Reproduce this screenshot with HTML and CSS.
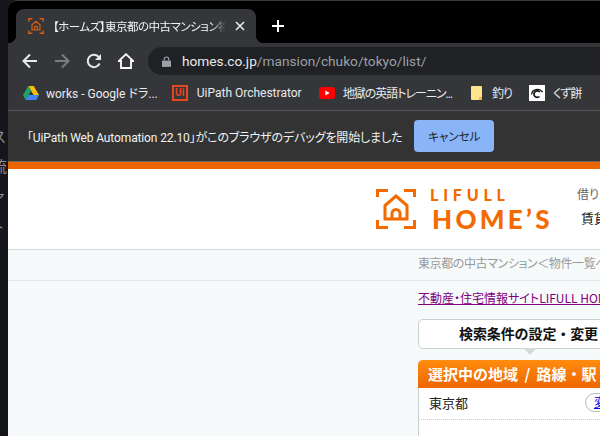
FILE: index.html
```html
<!DOCTYPE html>
<html lang="ja">
<head>
    <meta charset="UTF-8">
    <title>東京都の中古マンション</title>
    <link rel="stylesheet" href="styles.css">
</head>
<body>
    <div class="desktop-strip">
        <span>ス</span>
        <span>流</span>
        <span>ァ</span>
        <span>ト</span>
    </div>
    <div class="window">
        <div class="tabstrip">
            <div class="tab">
                <svg class="favicon" viewBox="0 0 40 40" width="16" height="16">
                    <path d="M2 9V2h9M29 2h9v7M2 31v7h9M29 38h9v-7" fill="none" stroke="#d85f10" stroke-width="3.500"/>
                    <path d="M10 30V17L20 8l10 9v13zM16.500 30v-6a3.500 3.500 0 0 1 7 0v6" fill="none" stroke="#d85f10" stroke-width="3"/>
                </svg>
                <span class="tab-title">【ホームズ】東京都の中古マンション物件一覧</span>
                <svg class="tab-close" viewBox="0 0 10 10" width="10" height="10">
                    <path d="M1 1l8 8M9 1l-8 8" stroke="#e8eaed" stroke-width="1.600"/>
                </svg>
            </div>
            <svg class="new-tab" viewBox="0 0 12 12" width="12" height="12">
                <path d="M6 0v12M0 6h12" stroke="#fff" stroke-width="2"/>
            </svg>
        </div>

        <div class="toolbar">
            <svg class="nav-icon" viewBox="0 0 16 16" width="16" height="16">
                <path d="M15 8H2M8 1.500L1.500 8 8 14.500" fill="none" stroke="#e8eaed" stroke-width="2"/>
            </svg>
            <svg class="nav-icon" viewBox="0 0 16 16" width="16" height="16">
                <path d="M1 8h13M8 1.500L14.500 8 8 14.500" fill="none" stroke="#7b7d80" stroke-width="2"/>
            </svg>
            <svg class="nav-icon" viewBox="0 0 16 16" width="16" height="16">
                <path d="M13.600 10.500A6.200 6.200 0 1 1 12.400 3.600L14 5.200" fill="none" stroke="#e8eaed" stroke-width="2"/>
                <path d="M15 1v6H9z" fill="#e8eaed"/>
            </svg>
            <svg class="nav-icon" viewBox="0 0 16 16" width="16" height="16">
                <path d="M3 15V8H.800L8 1.200 15.200 8H13v7z" fill="none" stroke="#fff" stroke-width="1.800"/>
            </svg>
            <div class="address">
                <svg class="lock" viewBox="0 0 10 12" width="9" height="11">
                    <path d="M0 5h10v7H0z" fill="#9aa0a6"/>
                    <path d="M2.500 5V3.500a2.500 2.500 0 0 1 5 0V5" fill="none" stroke="#9aa0a6" stroke-width="1.300"/>
                </svg>
                <span class="host">homes.co.jp</span><span class="path">/mansion/chuko/tokyo/list/</span>
            </div>
        </div>

        <div class="bookmarks">
            <div class="bookmark bookmark-drive">
                <svg viewBox="0 0 16 14" width="16" height="14">
                    <path d="M5.300 0h5.400l5.300 9h-5.400z" fill="#fbbc04"/>
                    <path d="M5.300 0L0 9l2.700 5 5.300-9z" fill="#1ea362"/>
                    <path d="M2.700 14h10.600l2.700-5H5.400z" fill="#4285f4"/>
                </svg>
                <span>works - Google ドラ...</span>
            </div>
            <div class="bookmark bookmark-uipath">
                <div class="uipath-logo">Ui</div>
                <span>UiPath Orchestrator</span>
            </div>
            <div class="bookmark bookmark-youtube">
                <svg viewBox="0 0 16 12" width="16" height="12">
                    <rect width="16" height="12" rx="3" fill="#f00"/>
                    <path d="M6.300 3.500v5l4.400-2.500z" fill="#fff"/>
                </svg>
                <span>地獄の英語トレーニン...</span>
            </div>
            <div class="bookmark bookmark-memo">
                <div class="memo-icon"></div>
                <span>釣り</span>
            </div>
            <div class="bookmark bookmark-kuzu">
                <svg viewBox="0 0 16 16" width="16" height="16">
                    <rect width="16" height="16" fill="#fff"/>
                    <path d="M2.500 9.500A6 5.500 0 0 1 13.500 7" fill="none" stroke="#111" stroke-width="1.300"/>
                    <path d="M10.500 11.500A3.300 3.300 0 1 1 10.800 7" fill="none" stroke="#111" stroke-width="1.700"/>
                </svg>
                <span>くず餅</span>
            </div>
        </div>

        <div class="infobar">
            <span class="infobar-text">「UiPath Web Automation 22.10」がこのブラウザのデバッグを開始しました</span>
            <button class="cancel" type="button">キャンセル</button>
        </div>

        <div class="page">
            <div class="site-header">
                <div class="logo">
                    <svg viewBox="0 0 40 40" width="40" height="40">
                        <path d="M1.500 8V1.500H12M28 1.500h10.500V8M1.500 31v7.500H12M28 38.500h10.500V31" fill="none" stroke="#f26a00" stroke-width="3"/>
                        <path d="M9 30V16.500L20 7l11 9.500V30zM16 30v-5.500a4 4 0 0 1 8 0V30" fill="none" stroke="#f26a00" stroke-width="3"/>
                    </svg>
                    <div class="logo-text">
                        <div class="logo-top">LIFULL</div>
                        <div class="logo-bottom">HOME’S</div>
                    </div>
                </div>
                <div class="site-nav">
                    <div class="nav-small">借り</div>
                    <div class="nav-main">賃貸</div>
                </div>
            </div>

            <div class="breadcrumb">
                <span>東京都の中古マンション＜物件一覧ページ＞</span>
            </div>

            <div class="content">
                <a class="site-link" href="#">不動産・住宅情報サイトLIFULL HOME'S</a>
                <div class="search-change">検索条件の設定・変更</div>
                <div class="panel">
                    <div class="panel-head">選択中の地域 / 路線・駅</div>
                    <div class="panel-row">
                        <span>東京都</span>
                        <a class="change-btn" href="#">変更</a>
                    </div>
                    <div class="panel-rest"></div>
                </div>
            </div>
        </div>
    </div>
</body>
</html>
```

FILE: styles.css
```css
* {
    box-sizing: border-box;
}
html, body {
    width: 600px;
    height: 436px;
    margin: 0;
    overflow: hidden;
}
body {
    display: flex;
    background-color: #15151b;
    font-family: Roboto, "Noto Sans CJK JP", sans-serif;
    font-feature-settings: "palt";
}
.desktop-strip {
    width: 8px;
    flex: none;
    overflow: hidden;
    padding-top: 125px;
    color: #8d8d92;
    font-size: 15px;
}
.desktop-strip span {
    display: block;
    height: 30px;
    margin-left: -8px;
}
.window {
    width: 592px;
    flex: none;
    display: flex;
    flex-direction: column;
}

/* tabs */
.tabstrip {
    height: 43px;
    display: flex;
    align-items: flex-end;
    background-color: #000;
    border-top: 1px solid #3c3c3e;
    border-top-left-radius: 9px;
    padding-left: 8px;
}
.tab {
    position: relative;
    width: 240px;
    height: 34px;
    display: flex;
    align-items: center;
    padding: 0 11px 0 12px;
    background-color: #35363a;
    border-radius: 8px 8px 0 0;
    color: #f1f3f4;
    font-size: 11.500px;
}
.tab::before,
.tab::after {
    content: "";
    position: absolute;
    bottom: 0;
    width: 8px;
    height: 8px;
}
.tab::before {
    left: -8px;
    background: radial-gradient(circle at 0 0, transparent 8px, #35363a 8.500px);
}
.tab::after {
    right: -8px;
    background: radial-gradient(circle at 100% 0, transparent 8px, #35363a 8.500px);
}
.favicon {
    flex: none;
    margin-right: 9px;
}
.tab-title {
    flex: 1;
    overflow: hidden;
    white-space: nowrap;
    letter-spacing: -.5px;
    -webkit-mask-image: linear-gradient(to right, #000 158px, transparent 173px);
    mask-image: linear-gradient(to right, #000 158px, transparent 173px);
}
.tab-close {
    flex: none;
    margin-left: 9px;
}
.new-tab {
    margin: 0 0 11px 16px;
}

/* toolbar */
.toolbar {
    height: 32px;
    display: flex;
    align-items: center;
    background-color: #35363a;
    padding: 4px 0 0 14px;
    gap: 16px;
}
.nav-icon {
    flex: none;
}
.address {
    height: 28px;
    flex: 1;
    display: flex;
    align-items: center;
    padding-left: 14px;
    margin-left: -2px;
    background-color: #202124;
    border-radius: 14px 0 0 14px;
    font-size: 13.700px;
    white-space: nowrap;
}
.lock {
    margin-right: 11px;
}
.host {
    color: #e8eaed;
}
.path {
    color: #9aa0a6;
}

/* bookmarks */
.bookmarks {
    height: 35px;
    display: flex;
    align-items: center;
    background-color: #35363a;
    padding-left: 15px;
    color: #e8eaed;
    font-size: 12px;
    white-space: nowrap;
}
.bookmark {
    display: flex;
    align-items: center;
    gap: 7px;
}
.bookmark-uipath {
    margin-left: 14px;
    gap: 9px;
}
.bookmark-youtube {
    margin-left: 17px;
    gap: 8px;
}
.bookmark-youtube span {
    letter-spacing: -1px;
}
.bookmark-memo {
    margin-left: 19px;
    gap: 10px;
}
.bookmark-memo span {
    letter-spacing: -1px;
}
.bookmark-kuzu {
    margin-left: 17px;
    gap: 8px;
}
.bookmark-kuzu span {
    letter-spacing: -1px;
}
.uipath-logo {
    width: 16px;
    height: 16px;
    border: 2px solid #e8461d;
    color: #e8461d;
    font-size: 10px;
    font-weight: 700;
    line-height: 12px;
    text-align: center;
}
.memo-icon {
    position: relative;
    width: 11px;
    height: 14px;
    background-color: #fde38a;
    border-radius: 1px;
}
.memo-icon::after {
    content: "";
    position: absolute;
    right: 0;
    bottom: 0;
    width: 3px;
    height: 3px;
    background-color: #e8b93c;
}

/* debug bar */
.infobar {
    height: 52px;
    display: flex;
    align-items: center;
    background-color: #333;
    border-top: 1px solid #58585a;
    border-bottom: 1px solid #6a6a6a;
    padding-left: 19px;
    color: #f1f3f4;
    font-size: 12px;
    white-space: nowrap;
}
.infobar-text {
    letter-spacing: -.13px;
}
.cancel {
    width: 80px;
    height: 32px;
    margin-left: 12px;
    border: none;
    border-radius: 4px;
    background-color: #8ab4f8;
    color: #202124;
    font-family: inherit;
    font-feature-settings: inherit;
    font-size: 11.500px;
}

/* page */
.page {
    flex: 1;
    min-height: 0;
    overflow: hidden;
    background-color: #f7fafb;
    border-top: 7px solid #ea6400;
    font-family: "Noto Sans CJK JP", sans-serif;
}
.site-header {
    height: 81px;
    display: flex;
    background-color: #fff;
    border-bottom: 1px solid #d6dadb;
    padding: 20px 0 0 368px;
    white-space: nowrap;
}
.logo {
    width: 201px;
    flex: none;
    display: flex;
}
.logo-text {
    margin-top: -2px;
    margin-left: 14px;
    color: #f26a00;
    font-family: Lato, sans-serif;
    font-weight: 900;
    line-height: 1;
}
.logo-top {
    height: 19px;
    font-size: 16px;
    letter-spacing: 4.800px;
}
.logo-bottom {
    margin-left: 2px;
    font-size: 26px;
    letter-spacing: 3.300px;
}
.nav-small {
    margin-top: -4px;
    color: #666;
    font-size: 12px;
}
.nav-main {
    margin-top: 6px;
    margin-left: 4px;
    color: #111;
    font-size: 13px;
}
.breadcrumb {
    height: 31px;
    border-bottom: 1px solid #e3e7e8;
    padding: 4px 0 0 410px;
    color: #999;
    font-size: 12px;
    letter-spacing: -.4px;
    white-space: nowrap;
}
.content {
    width: 240px;
    margin-left: 410px;
}
.site-link {
    display: block;
    margin-top: 8px;
    color: #800080;
    font-size: 12px;
    white-space: nowrap;
}
.search-change {
    position: relative;
    height: 30px;
    margin-top: 13px;
    background-color: #fff;
    border: 1px solid #c9d0d3;
    border-radius: 5px;
    padding-left: 40px;
    color: #111;
    font-size: 14px;
    font-weight: 700;
    font-feature-settings: normal;
    letter-spacing: -.1px;
    line-height: 27px;
    white-space: nowrap;
}
.search-change::after {
    content: "";
    position: absolute;
    left: 104px;
    bottom: -7px;
    border-top: 7px solid #d5dadc;
    border-left: 7px solid transparent;
    border-right: 7px solid transparent;
}
.panel {
    margin-top: 11px;
    background-color: #fff;
    border-left: 1px solid #c9d0d3;
    border-radius: 5px 5px 0 0;
}
.panel-head {
    height: 28px;
    margin-left: -1px;
    padding-left: 10px;
    background: linear-gradient(#ff8c0f, #ee6600);
    border-radius: 5px 5px 0 0;
    color: #fff;
    font-size: 15px;
    font-weight: 700;
    font-feature-settings: normal;
    word-spacing: 3px;
    line-height: 27px;
    white-space: nowrap;
}
.panel-row {
    height: 32px;
    display: flex;
    align-items: center;
    padding: 0 0 2px 10px;
    border-bottom: 1px dotted #c5cdd0;
    color: #222;
    font-size: 13px;
    font-feature-settings: normal;
}
.panel-rest {
    height: 40px;
}
.change-btn {
    width: 44px;
    height: 19px;
    flex: none;
    margin-left: 117px;
    padding-left: 8px;
    background-color: #fff;
    border: 1px solid #b4bcc0;
    border-radius: 10px;
    color: #0000ee;
    font-size: 12px;
    line-height: 16px;
}
```
